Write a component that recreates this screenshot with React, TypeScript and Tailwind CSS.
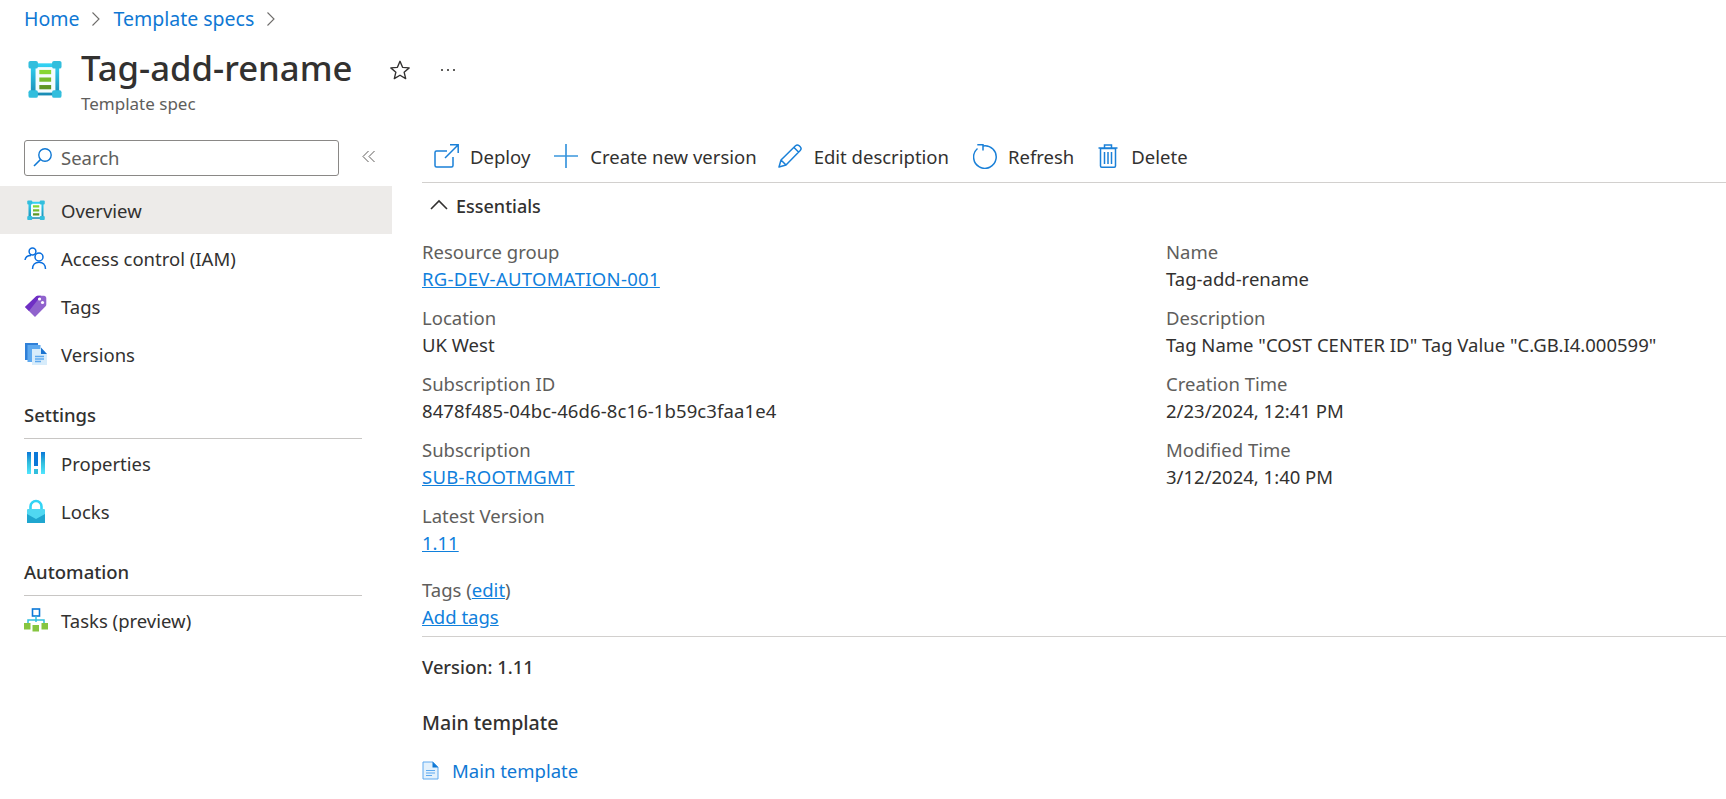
import React from "react";

const Ic = ({ children, w = 24, h = 24, vb = "0 0 24 24" }: { children: React.ReactNode; w?: number; h?: number; vb?: string }) => (
  <svg width={w} height={h} viewBox={vb} fill="none" className="shrink-0">{children}</svg>
);

const SpecIcon = ({ s, id }: { s: number; id: string }) => (
  <Ic w={s} h={s * 1.14} vb="0 0 36 40">
    <defs><linearGradient id={id} x1="0" y1="0" x2="0" y2="1"><stop offset="0" stopColor="#32d4f5" /><stop offset="1" stopColor="#198ab3" /></linearGradient></defs>
    <rect x="3" y="3" width="30" height="34" fill={`url(#${id})`} />
    <rect x="8" y="7" width="21" height="27" fill="#f4fcfe" />
    <rect x="0.500" y="0.500" width="10" height="8" rx="2" fill="#32bedd" />
    <rect x="25.500" y="0.500" width="10" height="8" rx="2" fill="#32bedd" />
    <rect x="0.500" y="31.500" width="10" height="8" rx="2" fill="#32bedd" />
    <rect x="25.500" y="31.500" width="10" height="8" rx="2" fill="#32bedd" />
    <rect x="12" y="10" width="12.500" height="4.500" fill="#86d633" />
    <rect x="12" y="18" width="12.500" height="4.500" fill="#76bc2d" />
    <rect x="12" y="26" width="12.500" height="4.500" fill="#5e9624" />
  </Ic>
);

const Iam = () => (
  <Ic>
    <circle cx="8.500" cy="5.500" r="3.400" stroke="#0b6fde" strokeWidth="1.500" />
    <path d="M1 14c.4-3 2.600-4.600 6-4.600" stroke="#0b6fde" strokeWidth="1.500" />
    <circle cx="15" cy="11" r="4" stroke="#0b6fde" strokeWidth="1.500" />
    <path d="M8.500 23c0-4 2.600-6.800 6.500-6.800s6.500 2.800 6.500 6.800" stroke="#0b6fde" strokeWidth="1.500" />
  </Ic>
);
const TagIcon = () => (
  <Ic>
    <path d="M1 13 12 2.500c.5-.5 1-.7 1.700-.7H20c1.300 0 2.300 1 2.300 2.300v6.500c0 .7-.2 1.200-.7 1.700L11 23z" fill="#9063cd" />
    <path d="M1 13 12 2.500c.5-.5 1-.7 1.700-.7H17L5 17z" fill="#6f2fc4" />
    <circle cx="15.500" cy="5" r="1.600" fill="#fff" /><circle cx="18.500" cy="8.500" r="1.600" fill="#fff" />
  </Ic>
);
const Versions = () => (
  <Ic>
    <rect x="1" y="1" width="13" height="17" fill="#2f80d8" />
    <rect x="3.500" y="3" width="13" height="17" fill="#5ea9ef" />
    <path d="M8 7h10l5 5v11H8z" fill="#d7ecfb" />
    <path d="M17 5.500 23 12h-6z" fill="#1a73d0" />
    <path d="M11 14.500h9M11 17h9M11 19.500h6" stroke="#5ea9ef" strokeWidth="1.300" />
  </Ic>
);
const Props = () => (
  <Ic>
    <defs><linearGradient id="pg" x1="0" y1="0" x2="0" y2="1"><stop offset="0" stopColor="#0b78d8" /><stop offset=".5" stopColor="#32bedd" /><stop offset="1" stopColor="#50e6ff" /></linearGradient></defs>
    <rect x="3" y="1" width="4" height="22" fill="url(#pg)" />
    <rect x="10" y="1" width="4" height="14" fill="#0b78d8" /><rect x="10" y="18" width="4" height="5" fill="#32bedd" />
    <rect x="17" y="1" width="4" height="22" fill="url(#pg)" />
  </Ic>
);
const Lock = () => (
  <Ic>
    <path d="M6.500 11V7.500a5.500 5.500 0 0 1 11 0V11" stroke="#32d4f5" strokeWidth="2.600" />
    <rect x="3" y="10" width="18" height="14" rx="1" fill="#50d8f2" />
    <path d="M3 24V15l9 5 9-5v9z" fill="#1fa6cf" />
  </Ic>
);
const Tasks = () => (
  <Ic>
    <rect x="8.500" y="1" width="7" height="7" fill="#fff" stroke="#0b78d8" strokeWidth="1.600" />
    <path d="M12 8v6M4 15v-3h16v3" stroke="#32bedd" strokeWidth="1.500" />
    <rect x="0" y="15" width="6.500" height="6.500" fill="#86c540" />
    <rect x="8.500" y="17" width="6.500" height="6.500" fill="#86c540" />
    <rect x="17.500" y="15" width="6.500" height="6.500" fill="#86c540" />
  </Ic>
);

const Nav = ({ icon, label, active = false }: { icon: React.ReactNode; label: string; active?: boolean }) => (
  <div className={"flex h-12 items-center gap-[13px] pl-[24px] text-[18.500px] text-[#323130] " + (active ? "bg-[#edebe9]" : "")}>
    <span className="flex w-[24px] justify-center">{icon}</span>
    <span className="pt-[2px]">{label}</span>
  </div>
);
const Section = ({ label }: { label: string }) => (
  <div className="ml-[24px] mr-[30px] mt-[25px] h-[36px] border-b border-[#c8c6c4] text-[18.500px] font-medium leading-[24px] text-[#323130]">{label}</div>
);
const Tool = ({ icon, label, gap }: { icon: React.ReactNode; label: string; gap: string }) => (
  <div className={"flex items-center text-[18.500px] text-[#323130] " + gap}>{icon}<span className="pt-[2px]">{label}</span></div>
);
const Link = ({ children, wide = false }: { children: React.ReactNode; wide?: boolean }) => (
  <a className={"text-[#1080dc] underline " + (wide ? "tracking-[0.3px]" : "")}>{children}</a>
);
const Field = ({ label, children }: { label: string; children: React.ReactNode }) => (
  <div className="h-[66px] text-[18.500px] leading-[27px]">
    <div className="text-[#605e5c]">{label}</div>
    <div className="text-[#323130]">{children}</div>
  </div>
);

export default function App() {
  return (
    <div className="h-[799px] w-[1726px] overflow-hidden bg-white font-['Noto_Sans','Open_Sans',sans-serif]">
      <div className="flex h-[38px] items-center gap-[12px] pl-[24px] text-[19.500px] text-[#0f78d4]">
        <span>Home</span>
        <svg width="10" height="16" viewBox="0 0 10 16" fill="none"><path d="M1.500 1.500 8 8l-6.500 6.500" stroke="#6e6c6a" strokeWidth="1.100" /></svg>
        <span>Template specs</span>
        <svg width="10" height="16" viewBox="0 0 10 16" fill="none"><path d="M1.500 1.500 8 8l-6.500 6.500" stroke="#6e6c6a" strokeWidth="1.100" /></svg>
      </div>
      <div className="flex h-[88px] pl-[28px]">
        <div className="mt-[22px]"><SpecIcon s={34} id="sg1" /></div>
        <div className="ml-[19px] mt-[7px]">
          <div className="text-[34.700px] font-medium leading-[46px] text-[#323130]">Tag-add-rename</div>
          <div className="pt-[3px] text-[17px] leading-[20px] text-[#605e5c]">Template spec</div>
        </div>
        <div className="ml-[37px] mt-[20px] flex h-[24px] items-center gap-[30px]">
          <svg width="22" height="22" viewBox="0 0 24 24" fill="none"><path d="m12 2.500 2.800 6.600 7.200.6-5.500 4.700 1.700 7-6.200-3.700-6.200 3.700 1.700-7L2 9.700l7.200-.6z" stroke="#323130" strokeWidth="1.500" strokeLinejoin="round" /></svg>
          <span className="flex gap-[4px]"><i className="h-[2px] w-[2px] bg-[#605e5c]" /><i className="h-[2px] w-[2px] bg-[#605e5c]" /><i className="h-[2px] w-[2px] bg-[#605e5c]" /></span>
        </div>
      </div>
      <div className="flex">
        <aside className="w-[392px] shrink-0">
          <div className="flex h-[60px] items-start pl-[24px] pt-[14px]">
            <div className="flex h-[36px] w-[315px] items-center rounded-[3px] border border-[#8a8886] pl-[8px] text-[18.500px] text-[#605e5c]">
              <svg width="20" height="22" viewBox="0 0 20 22" fill="none"><circle cx="12" cy="8" r="6.200" stroke="#0f78d4" strokeWidth="1.400" /><path d="M7.500 12.500 1 19" stroke="#0f78d4" strokeWidth="1.600" /></svg>
              <span className="ml-[8px]">Search</span>
            </div>
            <svg className="ml-[23px] mt-[10px]" width="13" height="13" viewBox="0 0 13 13" fill="none"><path d="M6.500 1 1 6.500 6.500 12M12.500 1 7 6.500l5.500 5.500" stroke="#605e5c" strokeWidth="1" /></svg>
          </div>
          <Nav active icon={<SpecIcon s={18} id="sg2" />} label="Overview" />
          <Nav icon={<Iam />} label="Access control (IAM)" />
          <Nav icon={<TagIcon />} label="Tags" />
          <Nav icon={<Versions />} label="Versions" />
          <Section label="Settings" />
          <Nav icon={<Props />} label="Properties" />
          <Nav icon={<Lock />} label="Locks" />
          <Section label="Automation" />
          <Nav icon={<Tasks />} label="Tasks (preview)" />
        </aside>
        <main className="ml-[30px] flex-1">
          <div className="flex h-[57px] items-center border-b border-[#d2d0ce] pb-[3px] pl-[12px] pt-[7px]">
            <Tool gap="gap-[11px] mr-[24px]" label="Deploy" icon={<svg width="25" height="24" viewBox="0 0 25 24" fill="none"><path d="M19 13v8.500a1.500 1.500 0 0 1-1.500 1.500h-15A1.500 1.500 0 0 1 1 21.500v-13A1.500 1.500 0 0 1 2.500 7H13M11 14 24 1M16 .8h8.200V9" stroke="#1a80d8" strokeWidth="1.500" /></svg>} />
            <Tool gap="gap-[12px] mr-[21px]" label="Create new version" icon={<svg width="24" height="24" viewBox="0 0 24 24" fill="none"><path d="M12 0v24M0 12h24" stroke="#3a96dd" strokeWidth="1.700" /></svg>} />
            <Tool gap="gap-[12px] mr-[24px]" label="Edit description" icon={<svg width="24" height="24" viewBox="0 0 24 24" fill="none"><path d="M1 23l2-7L17.500 1.800c1-1 2.600-1 3.700 0l1 1c1 1 1 2.600 0 3.700L8 21zM3 16l5 5M16 3.500l4.500 4.500" stroke="#1a80d8" strokeWidth="1.500" strokeLinejoin="round" /></svg>} />
            <Tool gap="gap-[10px] mr-[24px]" label="Refresh" icon={<svg width="25" height="25" viewBox="0 0 25 25" fill="none"><path d="M10 1.900A11.300 11.300 0 1 1 4.500 4.500" stroke="#1a80d8" strokeWidth="1.500" /><path d="M4.300 .8h5.700v5.700" stroke="#1a80d8" strokeWidth="1.500" /></svg>} />
            <Tool gap="gap-[13px]" label="Delete" icon={<svg width="20" height="24" viewBox="0 0 20 24" fill="none"><path d="M2.500 4.500h15v17.500a1.200 1.200 0 0 1-1.200 1.200H3.700a1.200 1.200 0 0 1-1.200-1.200zM.5 4h19M6.500 4V1h7v3" stroke="#1a80d8" strokeWidth="1.500" /><path d="M6.500 8v12M10 8v12M13.500 8v12" stroke="#1a80d8" strokeWidth="1.500" /></svg>} />
          </div>
          <div className="flex h-[43px] items-center gap-[8px] pl-[8px] text-[18px] font-medium text-[#323130]">
            <svg width="18" height="11" viewBox="0 0 18 11" fill="none"><path d="M1 10 9 2l8 8" stroke="#323130" strokeWidth="1.600" /></svg>
            <span className="pt-[3px]">Essentials</span>
          </div>
          <div className="grid grid-cols-[744px_1fr] pt-[12px]">
            <div>
              <Field label="Resource group"><Link wide>RG-DEV-AUTOMATION-001</Link></Field>
              <Field label="Location">UK West</Field>
              <Field label="Subscription ID"><span className="tracking-[0.1px]">8478f485-04bc-46d6-8c16-1b59c3faa1e4</span></Field>
              <Field label="Subscription"><Link wide>SUB-ROOTMGMT</Link></Field>
              <Field label="Latest Version"><Link>1.11</Link></Field>
            </div>
            <div>
              <Field label="Name">Tag-add-rename</Field>
              <Field label="Description">Tag Name "COST CENTER ID" Tag Value "C.GB.I4.000599"</Field>
              <Field label="Creation Time">2/23/2024, 12:41 PM</Field>
              <Field label="Modified Time">3/12/2024, 1:40 PM</Field>
            </div>
          </div>
          <div className="mt-[8px] h-[61px] border-b border-[#d2d0ce] text-[18.500px] leading-[27px]">
            <div className="text-[#605e5c]">Tags (<Link>edit</Link>)</div>
            <Link>Add tags</Link>
          </div>
          <div className="pt-[16px] text-[18.300px] font-medium leading-[27px] text-[#323130]">Version: 1.11</div>
          <div className="pt-[29px] text-[19.600px] font-medium leading-[27px] text-[#323130]">Main template</div>
          <div className="mt-[21px] flex items-center gap-[13px] text-[18.500px] leading-[27px] text-[#0f78d4]">
            <svg width="17" height="19" viewBox="0 0 17 19" fill="none"><path d="M1 1h10l5 5v12H1z" fill="#e3f1fc" stroke="#5ea9ef" strokeWidth="1" /><path d="M10.500 .8 16.200 6.500h-5.700z" fill="#0f78d4" /><path d="M4 9.500h9M4 12h9M4 14.500h6" stroke="#5ea9ef" strokeWidth="1.200" /></svg>
            <span>Main template</span>
          </div>
        </main>
      </div>
    </div>
  );
}
